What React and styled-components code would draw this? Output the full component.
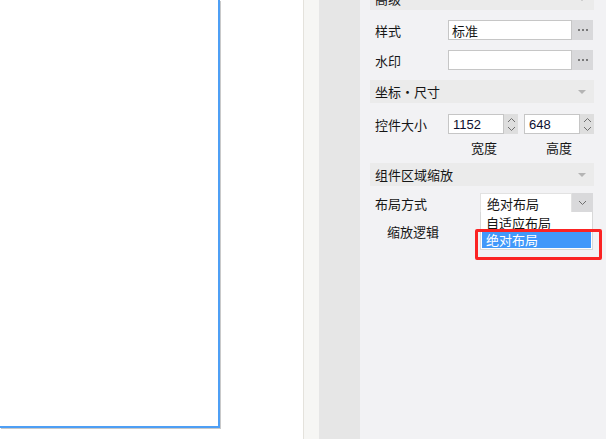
import React from 'react';
import styled, { createGlobalStyle } from 'styled-components';

const Global = createGlobalStyle`
  html, body { margin:0; padding:0; }
  body {
    width:606px;
    height:439px;
    overflow:hidden;
    font-family:"Noto Sans CJK SC","Liberation Sans",sans-serif;
    font-size:13px;
    color:#161616;
  }
`

const Page = styled.div`
  width:606px;
  height:439px;
  display:flex;
  overflow:hidden;
`
const Stage = styled.div`
  width:303px;
  background:#fff;
  border-right:1px solid #e4e2dc;
`
const Canvas = styled.div`
  width:218px;
  height:426px;
  background:#fff;
  border-right:2px solid #4e9ff5;
  border-bottom:2px solid #4e9ff5;
  box-shadow:1px 1px 0 #c9c9c9;
`
const Rail = styled.div`
  width:15px;
  background:#f6f6f4;
`
const Gutter = styled.div`
  width:41px;
  background:#e6e6e6;
`
const Panel = styled.div`
  flex:1;
  background:#f2f2f4;
  padding:0 12px 0 10px;
  position:relative;
`
const Inner = styled.div`
  margin-top:-13px;
  display:flex;
  flex-direction:column;
`
const Header = styled.div`
  height:23px;
  margin-top:${p => p.gap || 0}px;
  background:#ebebeb;
  display:flex;
  align-items:center;
  justify-content:space-between;
  padding:0 8px 0 5px;
  line-height:1;
`
const Tri = styled.span`
  width:0;
  height:0;
  border-left:4px solid transparent;
  border-right:4px solid transparent;
  border-top:4px solid #b4b4b4;
`
const Row = styled.div`
  height:${p => p.h || 30}px;
  margin-top:${p => p.gap || 0}px;
  display:flex;
  align-items:center;
  padding-left:${p => p.indent || 5}px;
`
const Label = styled.div`
  width:${p => p.w || 73}px;
  line-height:1;
  white-space:nowrap;
`
const Field = styled.div`
  display:flex;
  height:20px;
  margin-left:${p => p.gap || 0}px;
`
const TextBox = styled.div`
  width:${p => p.w}px;
  height:20px;
  box-sizing:border-box;
  background:#fff;
  border:1px solid ${p => p.soft ? '#e2e2e2' : '#c6c6c6'};
  display:flex;
  align-items:center;
  padding-left:${p => p.pad || 3}px;
  line-height:1;
  font-family:${p => p.num ? '"Liberation Sans",sans-serif' : 'inherit'};
  color:${p => p.num ? '#0d1030' : 'inherit'};
`
const Dots = styled.div`
  width:21px;
  height:20px;
  background:#d9d9db;
  display:flex;
  align-items:center;
  justify-content:center;
  gap:2px;
  span{ width:2px; height:2px; background:#7a7a7a; }
`
const Spin = styled.div`
  width:14px;
  height:20px;
  background:#dedede;
  display:flex;
  flex-direction:column;
  align-items:center;
  justify-content:center;
  gap:3px;
`
const Caps = styled.div`
  display:flex;
  padding-left:${p => p.left}px;
  height:16px;
  align-items:center;
`
const Cap = styled.div`
  width:30px;
  margin-left:${p => p.gap || 0}px;
  text-align:center;
  line-height:1;
  white-space:nowrap;
`
const Arrow = styled.div`
  width:21px;
  height:20px;
  background:#d9d9db;
  display:flex;
  align-items:center;
  justify-content:center;
`
const SelectWrap = styled.div`
  position:relative;
`
const Menu = styled.div`
  position:absolute;
  left:0;
  top:19px;
  width:113px;
  box-sizing:border-box;
  background:#fff;
  border:1px solid #d8d8d8;
  border-top:none;
  padding:1px;
  z-index:2;
`
const Item = styled.div`
  height:${p => p.active ? 17 : 18}px;
  display:flex;
  align-items:center;
  padding-left:4px;
  line-height:1;
  white-space:nowrap;
  background:${p => p.active ? '#4198fa' : 'transparent'};
  color:${p => p.active ? '#fff' : '#161616'};
`
const Highlight = styled.div`
  position:absolute;
  left:115px;
  top:229px;
  width:127px;
  height:31px;
  box-sizing:border-box;
  border:3px solid #fb2323;
  border-radius:2px;
  z-index:3;
`

function Chevron({ up }) {
  return (
    <svg width="9" height="6" viewBox="0 0 9 6">
      <path d={up ? 'M1 5 L4.5 1.5 L8 5' : 'M1 1 L4.5 4.5 L8 1'} fill="none" stroke="#6e6e6e" strokeWidth="1" />
    </svg>
  );
}

function Spinner() {
  return (
    <Spin>
      <Chevron up />
      <Chevron />
    </Spin>
  );
}

function More() {
  return <Dots><span /><span /><span /></Dots>;
}

export default function App() {
  return (
    <Page>
      <Global />
      <Stage>
        <Canvas />
      </Stage>
      <Rail />
      <Gutter />
      <Panel>
        <Inner>
          <Header>高级<Tri /></Header>
          <Row gap={5}>
            <Label>样式</Label>
            <Field><TextBox w={124}>标准</TextBox><More /></Field>
          </Row>
          <Row>
            <Label>水印</Label>
            <Field><TextBox w={124} /><More /></Field>
          </Row>
          <Header gap={5}>坐标・尺寸<Tri /></Header>
          <Row gap={6}>
            <Label>控件大小</Label>
            <Field>
              <TextBox w={56} num pad={4}>1152</TextBox><Spinner />
            </Field>
            <Field gap={6}>
              <TextBox w={56} num pad={4}>648</TextBox><Spinner />
            </Field>
          </Row>
          <Caps left={99}>
            <Cap>宽度</Cap>
            <Cap gap={45}>高度</Cap>
          </Caps>
          <Header gap={8}>组件区域缩放<Tri /></Header>
          <Row gap={2}>
            <Label w={105}>布局方式</Label>
            <SelectWrap>
              <Field>
                <TextBox w={92} pad={6} soft>绝对布局</TextBox>
                <Arrow><Chevron /></Arrow>
              </Field>
              <Menu>
                <Item>自适应布局</Item>
                <Item active>绝对布局</Item>
              </Menu>
            </SelectWrap>
          </Row>
          <Row h={26} indent={17}>
            <Label>缩放逻辑</Label>
          </Row>
        </Inner>
        <Highlight />
      </Panel>
    </Page>
  );
}
